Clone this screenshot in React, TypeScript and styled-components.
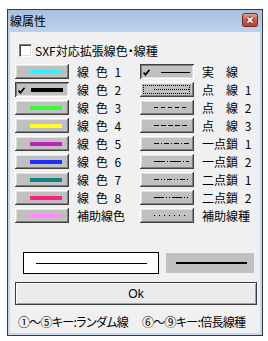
import styled, { createGlobalStyle } from "styled-components";

const GlobalStyle = createGlobalStyle`
  html, body {
    margin: 0;
    padding: 0;
    background: #ffffff;
  }
  body {
    font-family: "Noto Sans CJK JP", "Noto Sans", sans-serif;
    font-size: 12px;
    color: #000000;
  }
`;

type Swatch = { label: string; color: string; checked?: boolean };
type LineKind = { label: string; dash?: string; checked?: boolean; focused?: boolean };

const colors: Swatch[] = [
  { label: "線 色 1", color: "#33eeff" },
  { label: "線 色 2", color: "#000000", checked: true },
  { label: "線 色 3", color: "#33ff33" },
  { label: "線 色 4", color: "#ffff22" },
  { label: "線 色 5", color: "#c020c0" },
  { label: "線 色 6", color: "#1f2fff" },
  { label: "線 色 7", color: "#108080" },
  { label: "線 色 8", color: "#ff1f7f" },
  { label: "補助線色", color: "#ff88ff" },
];

const lines: LineKind[] = [
  { label: "実　線", checked: true },
  { label: "点　線 1", dash: "1 1", focused: true },
  { label: "点　線 2", dash: "4 3" },
  { label: "点　線 3", dash: "5 2" },
  { label: "一点鎖 1", dash: "5 2 1 2" },
  { label: "一点鎖 2", dash: "11 2 1 2" },
  { label: "二点鎖 1", dash: "5 2 1 2 1 2" },
  { label: "二点鎖 2", dash: "10 2 1 2 1 2" },
  { label: "補助線種", dash: "1 4" },
];

const Screen = styled.div`
  padding: 9px 0 0 7px;
`;

const Window = styled.div`
  width: 256px;
  height: 327px;
  box-sizing: border-box;
  border: 1px solid #3a3a3a;
  background: linear-gradient(#a6c0df, #bcd2eb 22px, #c4d8ee);
  padding: 0 2px 2px 2px;
  display: flex;
  flex-direction: column;
`;

const TitleBar = styled.div`
  height: 22px;
  display: flex;
  align-items: center;
  justify-content: space-between;
  padding-right: 2px;
`;

const Title = styled.span`
  font-size: 12px;
  line-height: 22px;
  color: #000;
`;

const CloseButton = styled.div`
  width: 16px;
  height: 14px;
  margin-top: -2px;
  display: flex;
`;

const Client = styled.div`
  flex: 1;
  background: #f0f0f0;
  display: flex;
  flex-direction: column;
`;

const CheckRow = styled.label`
  display: flex;
  align-items: center;
  gap: 3px;
  height: 13px;
  margin: 12px 0 0 9px;
  font-feature-settings: "palt";
  line-height: 13px;
`;

const CheckBox = styled.span`
  width: 13px;
  height: 13px;
  box-sizing: border-box;
  background: #ffffff;
  border: 1px solid;
  border-color: #808080 #ffffff #ffffff #808080;
  box-shadow: inset 1px 1px #404040, inset -1px -1px #dfdfdf;
`;

const Grid = styled.div`
  margin: 7px 0 0 5px;
  display: grid;
  grid-template-columns: 54px 55px 54px 1fr;
  grid-auto-rows: 15px;
  column-gap: 8px;
  row-gap: 3px;
`;

const Bevel = styled.div<{ $pressed?: boolean; $focused?: boolean }>`
  position: relative;
  box-sizing: border-box;
  background: #c0c0c0;
  display: flex;
  align-items: center;
  padding: ${({ $pressed }) => ($pressed ? "1px 6px 0 3px" : "0 7px 0 3px")};
  box-shadow: ${({ $pressed }) =>
    $pressed
      ? "inset 1px 1px #404040, inset -1px -1px #ffffff, inset 2px 2px #808080, inset -2px -2px #dfdfdf"
      : "inset -1px -1px #404040, inset 1px 1px #ffffff, inset -2px -2px #808080, inset 2px 2px #dfdfdf"};

  &::after {
    content: "";
    display: ${({ $focused }) => ($focused ? "block" : "none")};
    position: absolute;
    inset: 3px 4px 3px 3px;
    border: 1px dotted #000;
  }
`;

const LineButton = styled(Bevel)`
  padding: ${({ $pressed }) => ($pressed ? "1px 4px 0 3px" : "0 5px 0 3px")};
`;

const ColorBar = styled.span<{ $color: string }>`
  margin-left: auto;
  width: 32px;
  height: 4px;
  background: ${({ $color }) => $color};
`;

const Label = styled.span`
  display: flex;
  align-items: center;
  white-space: pre;
  word-spacing: 4px;
  line-height: 15px;
`;

const DashLine = styled.svg`
  margin-left: auto;
  overflow: visible;
`;

const Preview = styled.div`
  display: flex;
  align-items: center;
  gap: 7px;
  height: 22px;
  margin: 29px 0 0 13px;
`;

const WhiteBox = styled.div`
  width: 136px;
  height: 22px;
  box-sizing: border-box;
  border: 1px solid #000;
  background: #fff;
  display: flex;
  align-items: center;
  padding-left: 12px;
`;

const GrayBox = styled.div`
  width: 88px;
  height: 20px;
  background: #c0c0c0;
  display: flex;
  align-items: center;
  padding-left: 10px;
  box-sizing: border-box;
`;

const Stroke = styled.span<{ $w: number; $h: number }>`
  width: ${({ $w }) => $w}px;
  height: ${({ $h }) => $h}px;
  background: #000;
`;

const OkButton = styled.div`
  margin: 8px 0 0 5px;
  width: 242px;
  height: 23px;
  box-sizing: border-box;
  border: 1px solid #3c3c3c;
  background: #ebebeb;
  box-shadow: inset 1px 1px #ffffff, inset -1px -1px #a0a0a0;
  display: flex;
  align-items: center;
  justify-content: center;
  font-family: "Liberation Sans", "Noto Sans CJK JP", sans-serif;
  font-size: 12px;
`;

const Footer = styled.div`
  display: flex;
  margin: 9px 0 0 8px;
  line-height: 16px;
  font-feature-settings: "palt";
  letter-spacing: -0.7px;
  white-space: nowrap;
`;

const FooterPart = styled.span<{ $w: number }>`
  width: ${({ $w }) => $w}px;
`;

const Check = () => (
  <svg width="7" height="7" viewBox="0 0 7 7">
    <path d="M0.6 3.6 L2.5 5.8 L6.5 0.8" fill="none" stroke="#000" strokeWidth="1.6" />
  </svg>
);

const CloseIcon = () => (
  <svg width="16" height="14" viewBox="0 0 16 14">
    <defs>
      <linearGradient id="cls" x1="0" y1="0" x2="0" y2="1">
        <stop offset="0" stopColor="#e8a593" />
        <stop offset="0.5" stopColor="#cc5a45" />
        <stop offset="1" stopColor="#b8412c" />
      </linearGradient>
    </defs>
    <rect x="0.5" y="0.5" width="15" height="13" rx="2" fill="url(#cls)" stroke="#6e2a20" />
    <path d="M5.5 4.5 L10.5 9.5 M10.5 4.5 L5.5 9.5" stroke="#5a2018" strokeWidth="3.4" />
    <path d="M5.5 4.5 L10.5 9.5 M10.5 4.5 L5.5 9.5" stroke="#ffffff" strokeWidth="1.8" />
  </svg>
);

const App = () => {
  return (
    <Screen>
      <GlobalStyle />
      <Window>
        <TitleBar>
          <Title>線属性</Title>
          <CloseButton>
            <CloseIcon />
          </CloseButton>
        </TitleBar>
        <Client>
          <CheckRow>
            <CheckBox />
            <span>SXF対応拡張線色・線種</span>
          </CheckRow>
          <Grid>
            {colors.map((c, i) => {
              const l = lines[i];
              return [
                <Bevel key={`c${i}`} $pressed={c.checked}>
                  {c.checked && <Check />}
                  <ColorBar $color={c.color} />
                </Bevel>,
                <Label key={`cl${i}`}>{c.label}</Label>,
                <LineButton key={`l${i}`} $pressed={l.checked} $focused={l.focused}>
                  {l.checked && <Check />}
                  <DashLine width={l.checked ? 29 : 35} height="3">
                    <line
                      x1="0"
                      y1="1.5"
                      x2={l.checked ? 29 : 35}
                      y2="1.5"
                      stroke="#000"
                      strokeWidth="1"
                      strokeDasharray={l.dash}
                    />
                  </DashLine>
                </LineButton>,
                <Label key={`ll${i}`}>{l.label}</Label>,
              ];
            })}
          </Grid>
          <Preview>
            <WhiteBox>
              <Stroke $w={111} $h={1} />
            </WhiteBox>
            <GrayBox>
              <Stroke $w={71} $h={2} />
            </GrayBox>
          </Preview>
          <OkButton>Ok</OkButton>
          <Footer>
            <FooterPart $w={124}>①～⑤キー:ランダム線</FooterPart>
            <FooterPart $w={112}>⑥～⑨キー:倍長線種</FooterPart>
          </Footer>
        </Client>
      </Window>
    </Screen>
  );
};

export default App;
